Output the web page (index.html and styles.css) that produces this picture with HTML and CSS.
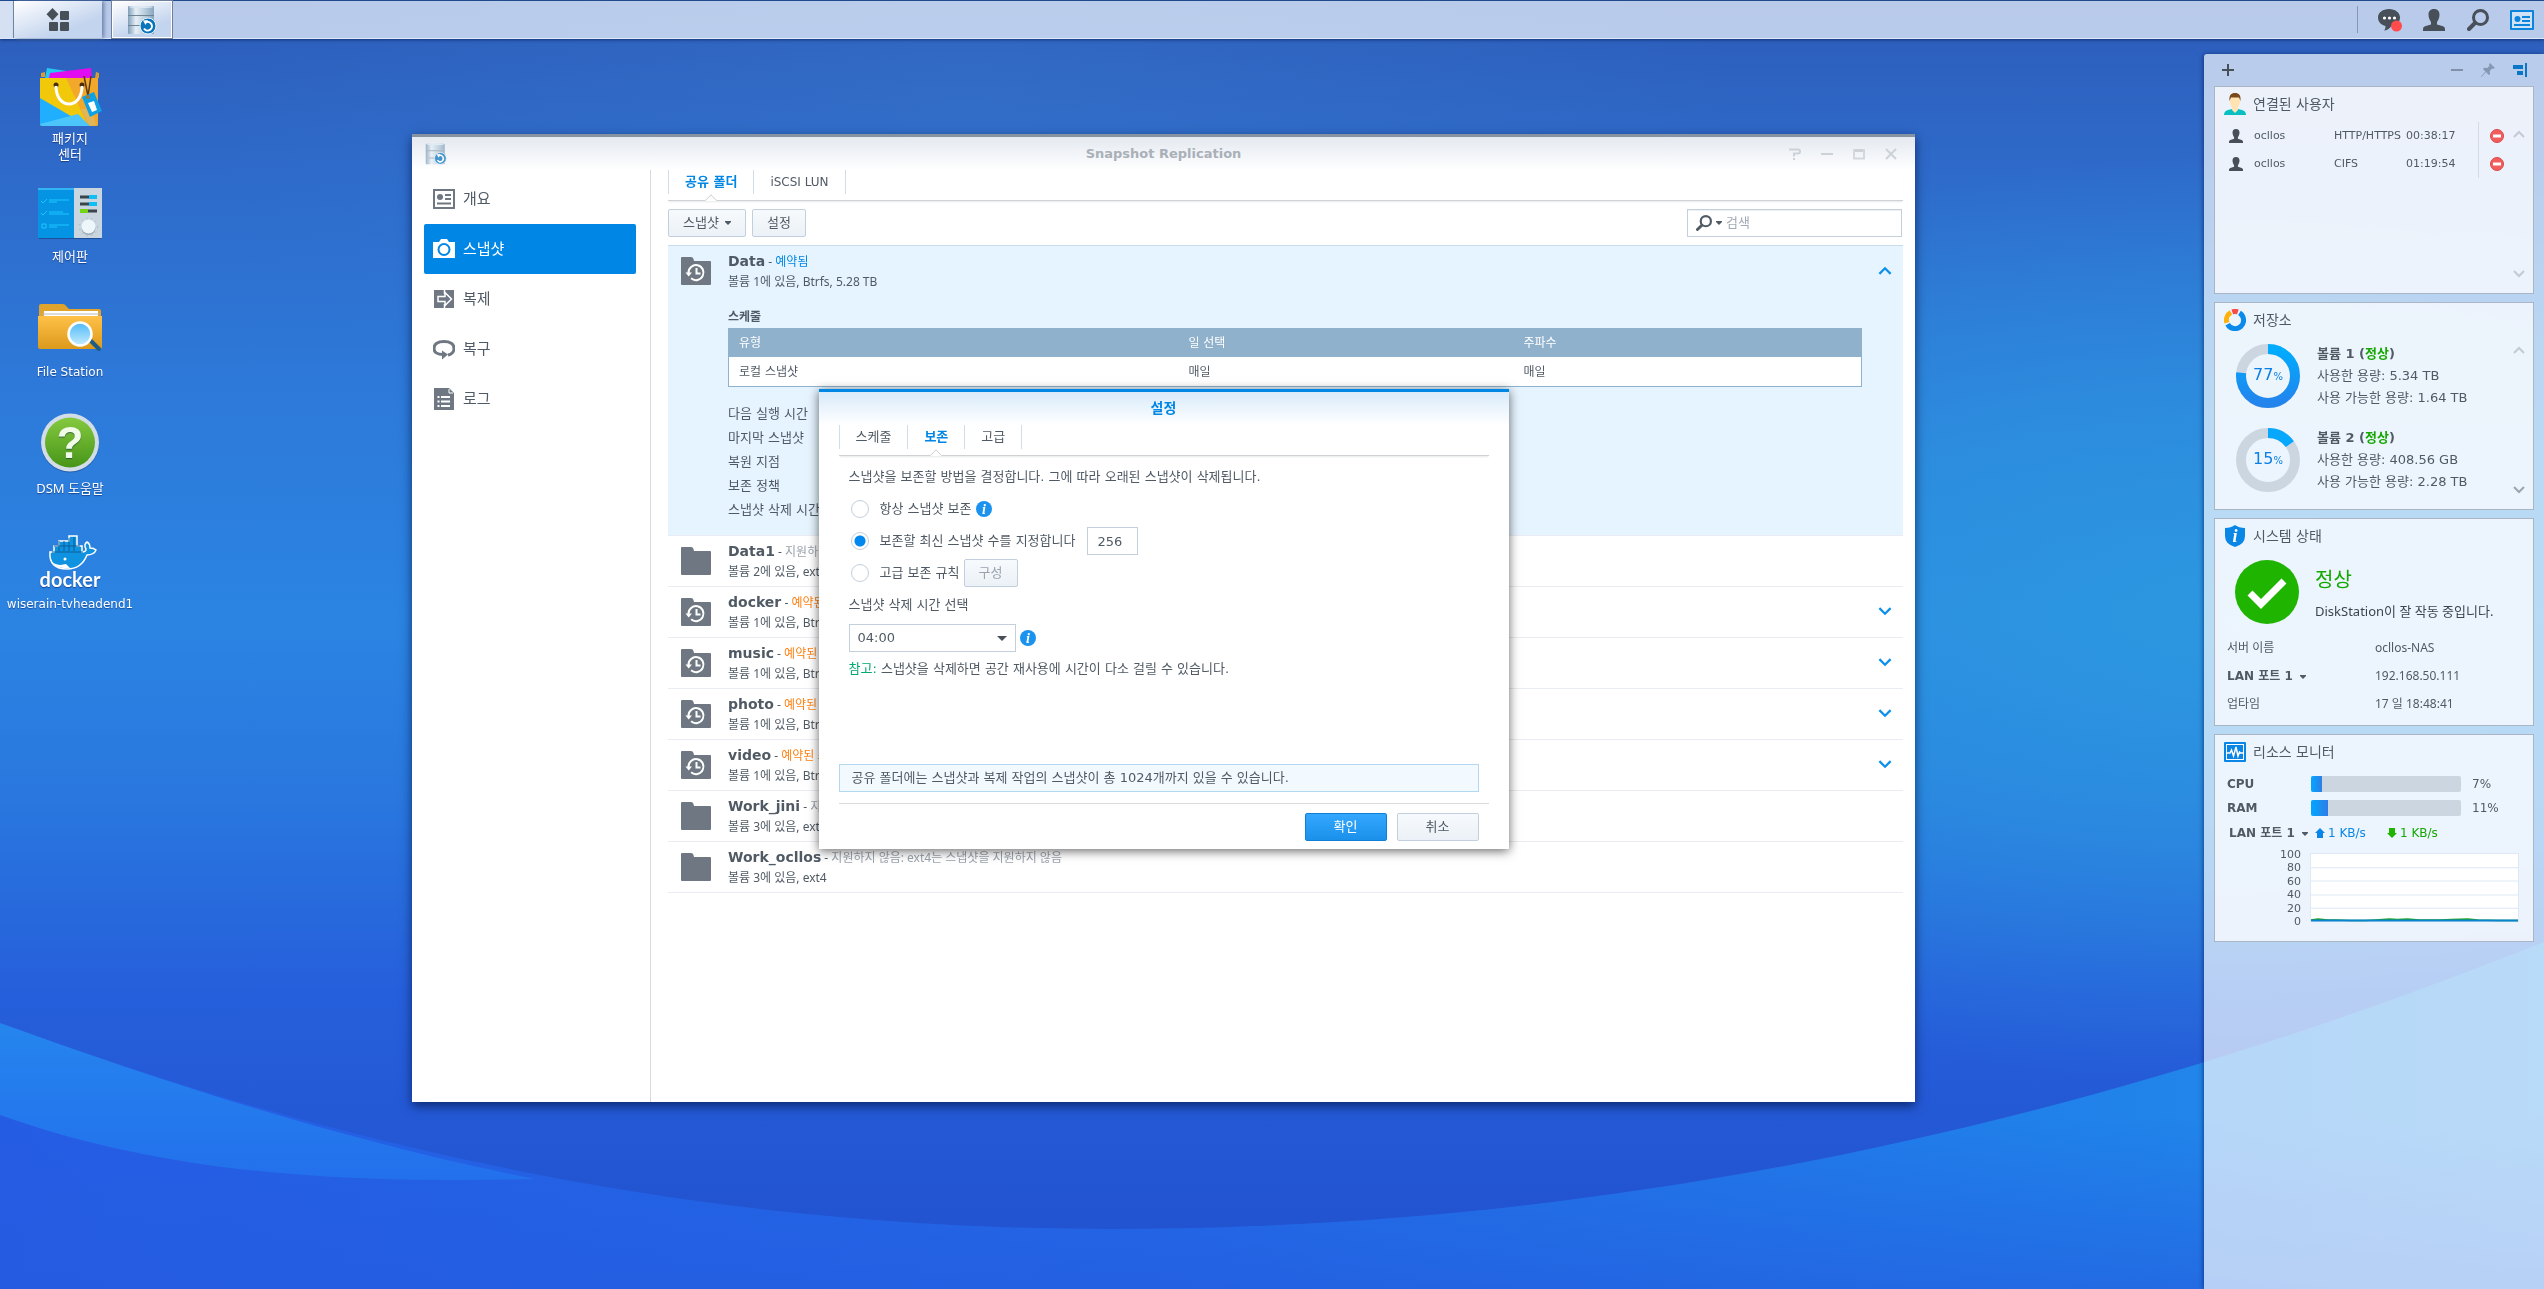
FILE: index.html
```html
<!DOCTYPE html>
<html lang="ko">
<head>
<meta charset="UTF-8">
<meta name="viewport" content="width=device-width, initial-scale=1.0">
<title>DiskStation - Snapshot Replication</title>
<link rel="stylesheet" href="styles.css">
</head>
<body>

<svg class="sprite" aria-hidden="true">
  <defs>
    <linearGradient id="g-metal"><stop offset="0" stop-color="#7f9db8"/><stop offset=".3" stop-color="#e6eff6"/><stop offset=".65" stop-color="#b9cddd"/><stop offset="1" stop-color="#88a5bf"/></linearGradient>
    <linearGradient id="g-green" x2="0" y2="1"><stop offset="0" stop-color="#85c93f"/><stop offset="1" stop-color="#479518"/></linearGradient>
    <linearGradient id="g-ring" x1="1" x2="0"><stop offset="0" stop-color="#00acff"/><stop offset="1" stop-color="#2384ec"/></linearGradient>
    <linearGradient id="g-folder" x2="0" y2="1"><stop offset="0" stop-color="#ffc148"/><stop offset="1" stop-color="#dc9a1c"/></linearGradient>
    <linearGradient id="g-lens" x2="0" y2="1"><stop offset="0" stop-color="#4fb9f5"/><stop offset="1" stop-color="#c5ecff"/></linearGradient>
  </defs>
  <symbol id="snapshot-app" viewBox="0 0 30 30">
    <path fill="url(#g-metal)" d="M1 2q0-1 1-1h24q1 0 1 1v8H1zM1 11h26v9H1zM1 21h26v7q0 1-1 1H2q-1 0-1-1z"/>
    <ellipse cx="14" cy="2" rx="12" ry="1" fill="#dde9f2"/>
    <path d="M1 10.500h26M1 20.500h26" stroke="#6f8494"/>
    <circle cx="21" cy="21" r="8" fill="#0a74bd" stroke="#eef5fa"/>
    <path d="M18.500 17.500a4.300 4.300 0 1 1-1.500 6" fill="none" stroke="#fff" stroke-width="2"/>
    <path d="M16 15.500l5-.5-2.500 5z" fill="#fff"/>
  </symbol>
  <symbol id="user" viewBox="0 0 22 22">
    <path d="M11 0c4 0 5.500 2.500 5.500 5.500 0 3.500-1.500 6-2.500 7.500v2.500l6 1.800q2 .7 2 2.700v2H0v-2q0-2 2-2.700l6-1.800V13C7 11.500 5.500 9 5.500 5.500 5.500 2.500 7 0 11 0z"/>
  </symbol>
  <symbol id="magnifier" viewBox="0 0 22 22">
    <circle cx="13.500" cy="8.500" r="7" fill="none" stroke="currentColor" stroke-width="3"/>
    <path d="M8 14l-6 6" stroke="currentColor" stroke-width="4" stroke-linecap="round"/>
  </symbol>
  <symbol id="folder" viewBox="0 0 30 28">
    <path d="M0 1q0-1 1-1h9q2 0 2.500 2l.5 2h16q1 0 1 1v22q0 1-1 1H1q-1 0-1-1z" fill="#6f7882"/>
  </symbol>
  <symbol id="folder-snap" viewBox="0 0 30 28">
    <use href="#folder"/>
    <path d="M7.500 16a7.500 7.500 0 1 1 2.600 5.300" fill="none" stroke="#fff" stroke-width="2"/>
    <path d="M4.500 15.500h6.500l-3.300 4z" fill="#fff"/>
    <path d="M15.500 11v5.500h4" fill="none" stroke="#fff" stroke-width="2"/>
  </symbol>
  <symbol id="chevron-up" viewBox="0 0 12 8"><path d="M1 7l5-5 5 5" fill="none" stroke="currentColor" stroke-width="2"/></symbol>
  <symbol id="chevron-down" viewBox="0 0 12 8"><path d="M1 1l5 5 5-5" fill="none" stroke="currentColor" stroke-width="2"/></symbol>
  <symbol id="caret" viewBox="0 0 6 4"><path d="M0 0h6v1L3 4 0 1z" fill="currentColor"/></symbol>
  <symbol id="kick" viewBox="0 0 14 14">
    <circle cx="7" cy="7" r="6.500" fill="#f25c5c" stroke="#d84a4a"/>
    <path d="M3 5.500h8v3H3z" fill="#fff"/>
  </symbol>
</svg>

<svg class="wallpaper" viewBox="0 0 2544 1289" preserveAspectRatio="none" aria-hidden="true">
  <defs>
    <linearGradient id="sky" x2="0" y2="1">
      <stop offset="0" stop-color="#2d5cba"/><stop offset=".12" stop-color="#2e69c8"/><stop offset=".3" stop-color="#2d79d9"/>
      <stop offset=".48" stop-color="#2b84e2"/><stop offset=".62" stop-color="#2977df"/><stop offset=".77" stop-color="#265fdb"/><stop offset=".95" stop-color="#2253d0"/>
    </linearGradient>
    <linearGradient id="floor"><stop offset="0" stop-color="#255ce4"/><stop offset=".45" stop-color="#226ae8"/><stop offset=".85" stop-color="#2084ea"/><stop offset="1" stop-color="#2b93ec"/></linearGradient>
    <linearGradient id="floor-shade" x2="0" y2="1"><stop offset="0" stop-color="#245ade" stop-opacity="0"/><stop offset=".5" stop-color="#245ade" stop-opacity="0"/><stop offset="1" stop-color="#245ade" stop-opacity=".6"/></linearGradient>
    <linearGradient id="band" x2="0" y2="1"><stop offset="0" stop-color="#2585ee"/><stop offset="1" stop-color="#2370ec"/></linearGradient>
    <radialGradient id="glow" cx=".88" cy=".48" r=".36"><stop offset="0" stop-color="#2c9be0" stop-opacity=".85"/><stop offset=".5" stop-color="#2c9be0" stop-opacity=".5"/><stop offset="1" stop-color="#2c9be0" stop-opacity="0"/></radialGradient>
    <radialGradient id="glow-top" cx=".38" cy=".08" r=".3"><stop offset="0" stop-color="#3b7fd0" stop-opacity=".3"/><stop offset="1" stop-color="#3b7fd0" stop-opacity="0"/></radialGradient>
  </defs>
  <rect width="2544" height="1289" fill="url(#sky)"/>
  <rect width="2544" height="1289" fill="url(#glow)"/>
  <rect width="2544" height="1289" fill="url(#glow-top)"/>
  <path d="M0 1023C350 1150 700 1229 1111 1229S2000 1160 2544 942V1289H0z" fill="url(#floor)"/>
  <path d="M0 1023C350 1150 700 1229 1111 1229S2000 1160 2544 942V1289H0z" fill="url(#floor-shade)"/>
  <path d="M0 1023C180 1088 350 1142 535 1179C330 1184 160 1172 0 1115z" fill="url(#band)"/>
</svg>

<header class="taskbar">
  <button class="task-blank" aria-label="바탕 화면 보기"></button>
  <button class="task-menu" aria-label="기본 메뉴">
    <svg width="24" height="24" viewBox="0 0 24 24" fill="#474f58">
      <path d="M6.500 0l6 6.300-6 6.200-6-6.200z"/><rect x="14" y="3" width="9" height="9" rx="1"/>
      <rect x="3" y="14" width="9" height="9" rx="1"/><rect x="14" y="14" width="9" height="9" rx="1"/>
    </svg>
  </button>
  <button class="task-app" aria-label="Snapshot Replication"><svg width="30" height="30"><use href="#snapshot-app"/></svg></button>
  <div class="tray">
    <button aria-label="알림">
      <svg width="24" height="24" viewBox="0 0 24 24">
        <path d="M11 1c6 0 11 3.500 11 8.500S18 18 13 18.500c-2 2.500-4.500 4-7 4 1-1 1.500-2.500 1.500-4.500C3 17 0 13.500 0 9.500 0 4.500 5 1 11 1z" fill="#474f58"/>
        <circle cx="6.500" cy="10" r="1.600" fill="#fff"/><circle cx="11.500" cy="10" r="1.600" fill="#fff"/><circle cx="16.500" cy="10" r="1.600" fill="#fff"/>
        <circle cx="18.500" cy="18" r="5.500" fill="#ff4b4b"/>
      </svg>
    </button>
    <button aria-label="옵션"><svg width="22" height="22" fill="#474f58"><use href="#user"/></svg></button>
    <button aria-label="검색"><svg width="22" height="22"><use href="#magnifier"/></svg></button>
    <button aria-label="위젯">
      <svg width="24" height="20" viewBox="0 0 24 20">
        <rect width="24" height="20" rx="1" fill="#0a84dc"/><rect x="2" y="2" width="20" height="16" fill="#cfe2f6"/>
        <circle cx="7.500" cy="9" r="3" fill="#0a84dc"/><path d="M12 7h8M12 11h8M4 15h16" stroke="#0a84dc" stroke-width="2"/>
      </svg>
    </button>
  </div>
</header>

<nav class="shortcuts">
  <a href="#">
    <svg width="64" height="64" viewBox="0 0 64 64">
      <path d="M9 4l26 4v6H7z" fill="#24c8f0"/><path d="M12 9l41-5 1 10H11z" fill="#e20cf0"/>
      <path d="M3 9l4-1v5H3zM58 8l3 1v5h-4z" fill="#d99b2c"/>
      <path d="M2 14h58v46q0 2-2 2H4q-2 0-2-2z" fill="#f2c80a"/>
      <path d="M28 14h32v46q0 2-2 2h-8z" fill="#f2a92b"/>
      <path d="M2 34l48 28H4q-2 0-2-2z" fill="#20aeff"/><path d="M2 60l38-10 12 12H4z" fill="#4cc6fa"/>
      <path d="M43 46l9-3 6 18-6 1z" fill="#dfb65a"/>
      <circle cx="18" cy="21" r="2.500" fill="#4b2c0c"/><circle cx="44" cy="21" r="2.500" fill="#4b2c0c"/>
      <path d="M18 22c0 24 26 24 26 0" fill="none" stroke="#fff" stroke-width="3"/>
      <path d="M46 12l4 20 3-20" fill="none" stroke="#5a3a10" stroke-width="1.500"/>
      <path d="M44 33l12-5 8 19-12 6z" fill="#0fa1e6"/><circle cx="50" cy="33" r="2" fill="#a57a2a"/>
      <path d="M50 39l6-2 3 9-5 2z" fill="#fff"/>
    </svg>
    <span>패키지<br>센터</span>
  </a>
  <a href="#">
    <svg width="64" height="64" viewBox="0 0 64 64">
      <rect x="0" y="8" width="64" height="51" rx="2" fill="#1b4f9a"/>
      <rect x="0" y="8" width="36" height="50" fill="#0594e4"/><path d="M0 9h36" stroke="#32b4f5" stroke-width="2"/>
      <rect x="36" y="8" width="28" height="50" fill="#c9d6df"/>
      <path d="M3 21l2 2 4-4M3 33l2 2 4-4M4 44h4v4H4zM11 20h20M11 22h8M11 32h14M11 34h20M11 45h20M11 47h8" fill="none" stroke="#1cc8fc" stroke-width="1"/>
      <path d="M42 17h10M42 24h10M50 31h9" stroke="#3a444c" stroke-width="3"/><path d="M51 17h8M51 24h8" stroke="#10bdf5" stroke-width="4"/><path d="M42 31h8" stroke="#74d514" stroke-width="4"/>
      <circle cx="50.500" cy="47" r="9" fill="none" stroke="#9fb0bb" stroke-dasharray="1 4"/>
      <circle cx="50.500" cy="48" r="7" fill="#9aa8b2"/><circle cx="50.500" cy="46.500" r="7" fill="#edf6fb"/>
    </svg>
    <span>제어판</span>
  </a>
  <a href="#">
    <svg width="64" height="64" viewBox="0 0 64 64">
      <path d="M1 10q0-2 2-2h22q2 0 4 3l2 2h30q2 0 2 2v8H1z" fill="#e0a32c"/>
      <path d="M6 15h54v8H6z" fill="#fff"/><path d="M4 18h58" stroke="#b9b9b9"/>
      <path d="M0 20h64v31q0 2-2 2H2q-2 0-2-2z" fill="url(#g-folder)"/>
      <path d="M53 45l8 8" stroke="#1d5c86" stroke-width="4" stroke-linecap="round"/>
      <circle cx="42" cy="38" r="11.500" fill="url(#g-lens)" stroke="#fff" stroke-width="2.500"/>
    </svg>
    <span class="latin">File Station</span>
  </a>
  <a href="#">
    <svg width="64" height="64" viewBox="0 0 64 64">
      <circle cx="32" cy="31.500" r="29" fill="#1b3f7a" opacity=".5"/>
      <circle cx="32" cy="30.500" r="29" fill="#d3dde8"/><circle cx="32" cy="30.500" r="25" fill="url(#g-green)"/>
      <text x="32" y="46" text-anchor="middle" class="help-mark">?</text>
    </svg>
    <span>DSM 도움말</span>
  </a>
  <a href="#">
    <svg width="64" height="64" viewBox="0 0 64 64">
      <path d="M12 24h4v-6h5v-5h10V8h8v10h5v6c3 0 4-1 4-3-2-3-1-6 1-7 2 1 3 4 3 6 3 0 5 1 6 2-1 3-5 5-9 5-4 10-11 14-20 14-12 0-18-6-17-17z" fill="#0f93e0" stroke="#fff" stroke-width="1.500"/>
      <path d="M16 18h26M21 13v10M26 13v10M31 10v13M36 9v14M14 24h31" stroke="#0a5f9a" fill="none"/>
      <path d="M14 34c6 4 10 3 14 2l4 4c-8 1-14-1-18-6z" fill="#fff"/><circle cx="27" cy="31" r="1.500" fill="#fff"/>
      <text x="32" y="59" text-anchor="middle" class="docker-mark">docker</text>
    </svg>
    <span class="latin">wiserain-tvheadend1</span>
  </a>
</nav>

<main class="window">
  <header class="window-head">
    <svg class="window-icon" width="22" height="22"><use href="#snapshot-app"/></svg>
    <h1>Snapshot Replication</h1>
    <div class="window-tools">
      <button aria-label="도움말"><svg width="12" height="12" viewBox="0 0 12 12"><path d="M0 1.500h9q2 0 2 2t-2 2H5v3M5 10v2" fill="none" stroke="#cdd2d8" stroke-width="2"/></svg></button>
      <button aria-label="최소화"><svg width="12" height="12" viewBox="0 0 12 12"><path d="M0 6h12" stroke="#cdd2d8" stroke-width="2"/></svg></button>
      <button aria-label="최대화"><svg width="12" height="12" viewBox="0 0 12 12"><path d="M0 2.500h12" stroke="#cdd2d8" stroke-width="3"/><path d="M1 1v9.500h10V1" fill="none" stroke="#d3d8de" stroke-width="2"/></svg></button>
      <button aria-label="닫기"><svg width="12" height="12" viewBox="0 0 12 12"><path d="M1 1l10 10M11 1L1 11" stroke="#cdd2d8" stroke-width="2"/></svg></button>
    </div>
  </header>

  <div class="window-body">
    <nav class="side-nav">
      <a href="#">
        <svg width="22" height="22" viewBox="0 0 22 22"><path d="M0 1h22v20H0z"/><path d="M2 3h18v16H2z" fill="#fff"/><circle cx="7" cy="9" r="3"/><path d="M12 7h6M12 11h6M4 15.500h14" stroke="#6f7882" stroke-width="2"/></svg>개요
      </a>
      <a href="#" class="active">
        <svg width="22" height="22" viewBox="0 0 22 22"><path d="M0 4h6l2-3h6l2 3h6v16H0z" fill="#fff"/><circle cx="11" cy="11.500" r="5.500" fill="none" stroke="#0086e5" stroke-width="2"/></svg>스냅샷
      </a>
      <a href="#">
        <svg width="22" height="22" viewBox="0 0 22 22"><path d="M1 2h20v18H1z"/><path d="M5 8.500h7V4.500l6.500 6.500-6.500 6.500v-4H5z" fill="#6f7882" stroke="#fff" stroke-width="1.500"/><path d="M11.500 1v5M11.500 16v5" stroke="#fff" stroke-width="1.500"/></svg>복제
      </a>
      <a href="#">
        <svg width="22" height="22" viewBox="0 0 22 22"><path d="M15 17c3-.5 6-3 6-6.500C21 6 17 3.500 11 3.500S1 6 1 10.500c0 4 4 6 9 6" fill="none" stroke="#6f7882" stroke-width="3"/><path d="M9 12.500l6 4-6 5z"/></svg>복구
      </a>
      <a href="#">
        <svg width="22" height="22" viewBox="0 0 22 22"><path d="M1 0h15l5 5v17H1z"/><path d="M16 1v4h4" fill="none" stroke="#fff"/><path d="M8 9h9M8 13.500h9M8 18h9M4.500 9h2M4.500 13.500h2M4.500 18h2" stroke="#fff" stroke-width="2"/></svg>로그
      </a>
    </nav>

    <section class="content">
      <div class="tabs">
        <button class="active">공유 폴더</button>
        <button class="latin">iSCSI LUN</button>
      </div>
      <div class="toolbar">
        <button class="btn btn-menu">스냅샷<svg width="6" height="4"><use href="#caret"/></svg></button>
        <button class="btn btn-set">설정</button>
        <label class="search">
          <svg width="16" height="16"><use href="#magnifier"/></svg>
          <svg width="6" height="4"><use href="#caret"/></svg>
          <input type="search" placeholder="검색" aria-label="검색">
        </label>
      </div>

      <ul class="shares">
        <li class="open">
          <svg class="share-icon" width="30" height="28"><use href="#folder-snap"/></svg>
          <div>
            <p class="share-name"><b>Data</b> - <span class="blue">예약됨</span></p>
            <p class="share-sub">볼륨 1에 있음, Btrfs, 5.28 TB</p>
          </div>
          <button class="toggle" aria-label="접기"><svg width="14" height="9"><use href="#chevron-up"/></svg></button>
          <div class="detail">
            <h2>스케줄</h2>
            <table>
              <thead><tr><th>유형</th><th>일 선택</th><th>주파수</th></tr></thead>
              <tbody><tr><td>로컬 스냅샷</td><td>매일</td><td>매일</td></tr></tbody>
            </table>
            <ul class="facts">
              <li>다음 실행 시간</li>
              <li>마지막 스냅샷</li>
              <li>복원 지점</li>
              <li>보존 정책</li>
              <li>스냅샷 삭제 시간</li>
            </ul>
          </div>
        </li>
        <li>
          <svg class="share-icon" width="30" height="28"><use href="#folder"/></svg>
          <div>
            <p class="share-name"><b>Data1</b> - <span class="grey">지원하지 않음: ext4는 스냅샷을 지원하지 않음</span></p>
            <p class="share-sub">볼륨 2에 있음, ext4</p>
          </div>
        </li>
        <li>
          <svg class="share-icon" width="30" height="28"><use href="#folder-snap"/></svg>
          <div>
            <p class="share-name"><b>docker</b> - <span class="orange">예약된 스냅샷 없음</span></p>
            <p class="share-sub">볼륨 1에 있음, Btrfs</p>
          </div>
          <button class="toggle" aria-label="펼치기"><svg width="14" height="9"><use href="#chevron-down"/></svg></button>
        </li>
        <li>
          <svg class="share-icon" width="30" height="28"><use href="#folder-snap"/></svg>
          <div>
            <p class="share-name"><b>music</b> - <span class="orange">예약된 스냅샷 없음</span></p>
            <p class="share-sub">볼륨 1에 있음, Btrfs</p>
          </div>
          <button class="toggle" aria-label="펼치기"><svg width="14" height="9"><use href="#chevron-down"/></svg></button>
        </li>
        <li>
          <svg class="share-icon" width="30" height="28"><use href="#folder-snap"/></svg>
          <div>
            <p class="share-name"><b>photo</b> - <span class="orange">예약된 스냅샷 없음</span></p>
            <p class="share-sub">볼륨 1에 있음, Btrfs</p>
          </div>
          <button class="toggle" aria-label="펼치기"><svg width="14" height="9"><use href="#chevron-down"/></svg></button>
        </li>
        <li>
          <svg class="share-icon" width="30" height="28"><use href="#folder-snap"/></svg>
          <div>
            <p class="share-name"><b>video</b> - <span class="orange">예약된 스냅샷 없음</span></p>
            <p class="share-sub">볼륨 1에 있음, Btrfs</p>
          </div>
          <button class="toggle" aria-label="펼치기"><svg width="14" height="9"><use href="#chevron-down"/></svg></button>
        </li>
        <li>
          <svg class="share-icon" width="30" height="28"><use href="#folder"/></svg>
          <div>
            <p class="share-name"><b>Work_jini</b> - <span class="grey">지원하지 않음: ext4는 스냅샷을 지원하지 않음</span></p>
            <p class="share-sub">볼륨 3에 있음, ext4</p>
          </div>
        </li>
        <li>
          <svg class="share-icon" width="30" height="28"><use href="#folder"/></svg>
          <div>
            <p class="share-name"><b>Work_ocllos</b> - <span class="grey">지원하지 않음: ext4는 스냅샷을 지원하지 않음</span></p>
            <p class="share-sub">볼륨 3에 있음, ext4</p>
          </div>
        </li>
      </ul>
    </section>
  </div>

  <form class="dialog" role="dialog" aria-labelledby="dialog-title">
    <h2 id="dialog-title">설정</h2>
    <div class="tabs">
      <button type="button">스케줄</button>
      <button type="button" class="active">보존</button>
      <button type="button">고급</button>
    </div>
    <div class="dialog-body">
      <p>스냅샷을 보존할 방법을 결정합니다. 그에 따라 오래된 스냅샷이 삭제됩니다.</p>
      <div class="option">
        <input type="radio" name="keep" id="keep-all"><label for="keep-all">항상 스냅샷 보존</label>
        <svg width="16" height="16" viewBox="0 0 16 16"><circle cx="8" cy="8" r="8" fill="#1b93ee"/><text x="8" y="13" text-anchor="middle" class="info-i">i</text></svg>
      </div>
      <div class="option">
        <input type="radio" name="keep" id="keep-count" checked><label for="keep-count">보존할 최신 스냅샷 수를 지정합니다</label>
        <input type="text" class="count" value="256" aria-label="스냅샷 수">
      </div>
      <div class="option">
        <input type="radio" name="keep" id="keep-rule"><label for="keep-rule">고급 보존 규칙</label>
        <button type="button" class="btn btn-set" disabled>구성</button>
      </div>
      <label class="time-label" for="time">스냅샷 삭제 시간 선택</label>
      <div class="time-row">
        <span class="select"><select id="time"><option>04:00</option></select><svg width="10" height="5" viewBox="0 0 10 5"><path d="M0 0h10L5 5z" fill="#474f58"/></svg></span>
        <svg width="16" height="16" viewBox="0 0 16 16"><circle cx="8" cy="8" r="8" fill="#1b93ee"/><text x="8" y="13" text-anchor="middle" class="info-i">i</text></svg>
      </div>
      <p class="note"><span>참고:</span> 스냅샷을 삭제하면 공간 재사용에 시간이 다소 걸릴 수 있습니다.</p>
      <p class="notice">공유 폴더에는 스냅샷과 복제 작업의 스냅샷이 총 1024개까지 있을 수 있습니다.</p>
    </div>
    <div class="dialog-foot">
      <button type="button" class="btn btn-primary">확인</button>
      <button type="button" class="btn">취소</button>
    </div>
  </form>
</main>

<aside class="widgets">
  <div class="widgets-bar">
    <button aria-label="추가"><svg width="12" height="12" viewBox="0 0 12 12"><path d="M6 0v12M0 6h12" stroke="#474f58" stroke-width="2"/></svg></button>
    <button class="push" aria-label="최소화"><svg width="12" height="12" viewBox="0 0 12 12"><path d="M0 6h12" stroke="#7f90a8" stroke-width="2"/></svg></button>
    <button aria-label="고정"><svg width="14" height="14" viewBox="0 0 14 14" fill="#8497b3"><path d="M9 0l5 5-1.500.8L11 5.500 8.800 8l.2 3-1.200 1L5 9l-4.500 5L0 13.500 4.500 8.500 2 6l1-1.200 3.200.2L8.500 3 8 1.500z"/></svg></button>
    <button aria-label="도킹"><svg width="14" height="14" viewBox="0 0 14 14" fill="#0a76c8"><path d="M0 2h10v4H0zM4 8h6v4H4zM12 0h2v14h-2z"/></svg></button>
  </div>

  <section class="widget">
    <h3>
      <svg width="22" height="22" viewBox="0 0 22 22"><path d="M0 22q0-4 4-5l4-1h6l4 1q4 1 4 5z" fill="#08bfc1"/><path d="M8 13h6v4l-3 3-3-3z" fill="#ffe3b3"/><ellipse cx="11" cy="8.500" rx="5" ry="7" fill="#ffe3b3"/><path d="M5.500 8C5 2 7 0 11 0s6 2 5.500 8L15 4.500H7z" fill="#7a4a1c"/></svg>
      연결된 사용자
    </h3>
    <div class="scroller">
      <table class="users">
        <tr><td><svg width="14" height="14" fill="#474f58"><use href="#user"/></svg></td><td>ocllos</td><td>HTTP/HTTPS</td><td>00:38:17</td><td><button aria-label="연결 끊기"><svg width="14" height="14"><use href="#kick"/></svg></button></td></tr>
        <tr><td><svg width="14" height="14" fill="#474f58"><use href="#user"/></svg></td><td>ocllos</td><td>CIFS</td><td>01:19:54</td><td><button aria-label="연결 끊기"><svg width="14" height="14"><use href="#kick"/></svg></button></td></tr>
      </table>
      <div class="arrows"><svg width="12" height="8"><use href="#chevron-up"/></svg><svg width="12" height="8"><use href="#chevron-down"/></svg></div>
    </div>
  </section>

  <section class="widget">
    <h3>
      <svg width="22" height="22" viewBox="0 0 22 22" fill="none" stroke-width="5"><path d="M15.500 3.900A8.500 8.500 0 1 1 3.600 15.200" stroke="#0a8aea"/><path d="M2.900 13.700A8.500 8.500 0 0 1 7 3.500" stroke="#ffb10a"/><path d="M8.300 2.900a8.500 8.500 0 0 1 5.600 0" stroke="#fa4b4b"/></svg>
      저장소
    </h3>
    <div class="scroller">
      <div class="volumes">
        <div class="volume">
          <div class="ring">
            <svg width="64" height="64" viewBox="0 0 64 64"><circle cx="32" cy="32" r="27" stroke="#ccd6e0"/><circle cx="32" cy="32" r="27" stroke="url(#g-ring)" pathLength="100" stroke-dasharray="77 23" transform="rotate(-90 32 32)"/></svg>
            <span>77<small>%</small></span>
          </div>
          <p><b>볼륨 1 (<em>정상</em>)</b><br>사용한 용량: 5.34 TB<br>사용 가능한 용량: 1.64 TB</p>
        </div>
        <div class="volume">
          <div class="ring">
            <svg width="64" height="64" viewBox="0 0 64 64"><circle cx="32" cy="32" r="27" stroke="#ccd6e0"/><circle cx="32" cy="32" r="27" stroke="#06a8fd" pathLength="100" stroke-dasharray="15 85" transform="rotate(-90 32 32)"/></svg>
            <span>15<small>%</small></span>
          </div>
          <p><b>볼륨 2 (<em>정상</em>)</b><br>사용한 용량: 408.56 GB<br>사용 가능한 용량: 2.28 TB</p>
        </div>
      </div>
      <div class="arrows"><svg width="12" height="8"><use href="#chevron-up"/></svg><svg class="on" width="12" height="8"><use href="#chevron-down"/></svg></div>
    </div>
  </section>

  <section class="widget">
    <h3>
      <svg width="22" height="22" viewBox="0 0 22 22"><path d="M1 3q6 0 10-3 4 3 10 3v8q0 8-10 11Q1 19 1 11z" fill="#0a86e6"/><text x="11" y="17" text-anchor="middle" class="info-i info-big">i</text></svg>
      시스템 상태
    </h3>
    <div class="health">
      <svg width="64" height="64" viewBox="0 0 64 64"><circle cx="32" cy="32" r="32" fill="#1fb400"/><path d="M15 33l11 11 23-23" fill="none" stroke="#fff" stroke-width="7"/></svg>
      <div><strong>정상</strong><p>DiskStation이 잘 작동 중입니다.</p></div>
    </div>
    <dl class="sysinfo">
      <dt>서버 이름</dt><dd>ocllos-NAS</dd>
      <dt class="port">LAN 포트 1 <svg width="6" height="4"><use href="#caret"/></svg></dt><dd>192.168.50.111</dd>
      <dt>업타임</dt><dd>17 일 18:48:41</dd>
    </dl>
  </section>

  <section class="widget">
    <h3>
      <svg width="22" height="20" viewBox="0 0 22 20"><rect width="22" height="20" rx="1" fill="#0a86e6"/><rect x="2.500" y="2.500" width="17" height="15" fill="none" stroke="#fff"/><path d="M3 11h3l1.500-3 2 6L12 5l2 9 1.500-4 1 1H19" fill="none" stroke="#fff" stroke-width="1.500"/></svg>
      리소스 모니터
    </h3>
    <div class="meter"><b>CPU</b><div class="track"><i style="width: 7%"></i></div><span>7%</span></div>
    <div class="meter"><b>RAM</b><div class="track"><i style="width: 11%"></i></div><span>11%</span></div>
    <div class="lan">
      <b>LAN 포트 1 <svg width="6" height="4"><use href="#caret"/></svg></b>
      <span class="up"><svg width="10" height="10" viewBox="0 0 10 10"><path d="M5 0l5 5H8v5H2V5H0z" fill="#0a86e6"/></svg>1 KB/s</span>
      <span class="down"><svg width="10" height="10" viewBox="0 0 10 10"><path d="M5 10l5-5H8V0H2v5H0z" fill="#1fb400"/></svg>1 KB/s</span>
    </div>
    <div class="chart">
      <div class="axis"><span>100</span><span>80</span><span>60</span><span>40</span><span>20</span><span>0</span></div>
      <svg viewBox="0 0 208 68" preserveAspectRatio="none">
        <path d="M.5.500h207v67H.5z" fill="#fff" stroke="#dfe9f5"/>
        <path d="M0 14.500h208M0 27.500h208M0 41.500h208M0 54.500h208" stroke="#dfe9f5"/>
        <path d="M1 66l7-1 10 1h8l14 .5h15l10-.5 14-1 8 .5 10-.5 12 1h20l12-.5 16-.5 10 1 20 .5h20" fill="none" stroke="#1fa51c" stroke-width="1.500"/>
        <path d="M1 66.500h206" stroke="#0a84d0" stroke-width="2"/>
      </svg>
    </div>
  </section>
</aside>

</body>
</html>
```

FILE: styles.css
```css
* {
  box-sizing: border-box;
}
body {
  margin: 0;
  min-height: 100vh;
  overflow: hidden;
  background: #2b6fd8;
  color: #505a64;
  font: 13px/16px "DejaVu Sans", "Noto Sans CJK KR", sans-serif;
}
h1, h2, h3, p, ul, dl, dd {
  margin: 0;
  padding: 0;
  font-weight: normal;
}
ul {
  list-style: none;
}
a {
  color: inherit;
  text-decoration: none;
}
button, input, select {
  margin: 0;
  padding: 0;
  border: 0;
  background: none;
  color: inherit;
  font: inherit;
}
svg {
  flex: none;
}
.sprite {
  position: absolute;
  width: 0;
  height: 0;
}
.latin {
  font-family: "DejaVu Sans", sans-serif;
  font-size: 12px;
}
.info-i {
  font: italic bold 14px "Liberation Serif", serif;
  fill: #fff;
}
.info-big {
  font-size: 18px;
}
.help-mark {
  font: bold 44px "Liberation Sans", sans-serif;
  fill: #f0fbe8;
}
.docker-mark {
  font: bold 20px Lato, sans-serif;
  fill: #fff;
}
.wallpaper {
  position: fixed;
  inset: 0;
  width: 100%;
  height: 100%;
}

/* taskbar */
.taskbar {
  position: relative;
  display: flex;
  height: 39px;
  border-top: 1px solid #1f4a8e;
  border-bottom: 1px solid #dce8f6;
  background: rgba(245, 249, 254, .7);
  box-shadow: 0 1px 3px rgba(0, 20, 70, .6);
}
.taskbar button {
  display: flex;
  align-items: center;
  justify-content: center;
}
.taskbar .task-blank {
  width: 14px;
  border-right: 1px solid #7184a4;
  background: rgba(255, 255, 255, .4);
}
.taskbar .task-menu {
  width: 88px;
  margin-right: 10px;
  background: linear-gradient(160deg, #fff, #c3d4ee 70%);
  box-shadow: 2px 0 4px #6c80a6;
}
.taskbar .task-app {
  width: 60px;
  border: 1px solid #fff;
  background: linear-gradient(160deg, #fff, #c3d4ee 70%);
  box-shadow: 0 0 0 1px #6f7f9a;
}
.tray {
  display: flex;
  margin-left: auto;
  color: #474f58;
}
.tray::before {
  content: "";
  width: 1px;
  margin: 5px 10px 5px 0;
  background: #8398b8;
}
.tray button {
  width: 44px;
}

/* desktop shortcuts */
.shortcuts {
  position: absolute;
  top: 64px;
  left: 0;
  width: 140px;
  color: #fff;
  font-family: "Noto Sans", "Noto Sans CJK KR", sans-serif;
  text-align: center;
  text-shadow: 0 1px 1px rgba(0, 20, 80, .5);
}
.shortcuts a {
  display: flex;
  flex-direction: column;
  align-items: center;
  gap: 4px;
  height: 116px;
}
.shortcuts a:first-child {
  gap: 2px;
}

/* application window */
.window {
  position: absolute;
  top: 134px;
  right: 629px;
  bottom: 187px;
  left: 412px;
  display: flex;
  flex-direction: column;
  border-top: 3px solid #8693a1;
  background: #fff;
  box-shadow: 0 4px 10px rgba(0, 20, 70, .7);
}
.window-head {
  display: flex;
  align-items: center;
  height: 33px;
  padding: 0 8px 0 13px;
  background: linear-gradient(#e4e9f0, #fff);
}
.window-head h1 {
  flex: 1;
  margin-left: 101px;
  color: #a9b0b8;
  font: bold 13px/16px "DejaVu Sans", sans-serif;
  text-align: center;
}
.window-icon {
  opacity: .75;
}
.window-tools {
  display: flex;
}
.window-tools button {
  display: flex;
  justify-content: center;
  width: 32px;
}
.window-body {
  display: flex;
  flex: 1;
}
.side-nav {
  width: 239px;
  padding: 4px 14px 0 12px;
  border-right: 1px solid #d8dadd;
}
.side-nav a {
  display: flex;
  align-items: center;
  gap: 8px;
  height: 50px;
  padding-left: 9px;
  border-radius: 2px;
  font-size: 15px;
}
.side-nav svg {
  fill: #6f7882;
}
.side-nav .active {
  background: #0086e5;
  color: #fff;
}
.content {
  flex: 1;
  padding: 0 12px 0 17px;
}

/* tabs */
.tabs {
  display: flex;
  height: 31px;
  padding-bottom: 6px;
  border-bottom: 1px solid #cfd1d4;
  box-shadow: 0 2px 2px -1px #e6e8ea;
}
.tabs button {
  position: relative;
  padding: 0 16px;
  border-left: 1px solid #d2dde8;
}
.tabs button:last-child {
  border-right: 1px solid #d2dde8;
}
.tabs .active {
  color: #0086e5;
  font-weight: bold;
}
.tabs .active::after {
  content: "";
  position: absolute;
  bottom: -12px;
  left: 50%;
  width: 9px;
  height: 9px;
  margin-left: -5px;
  border-top: 1px solid #cfd1d4;
  border-left: 1px solid #cfd1d4;
  background: #fff;
  transform: rotate(45deg);
  clip-path: polygon(0 0, 100% 0, 0 100%);
}

/* buttons and fields */
.btn {
  height: 28px;
  border: 1px solid #c3cfdc;
  border-radius: 2px;
  background: linear-gradient(#f7fafd, #ebf1f6);
}
.btn:disabled {
  color: #9aa3ad;
}
.btn-menu {
  display: flex;
  align-items: center;
  justify-content: center;
  gap: 6px;
  width: 78px;
}
.btn-set {
  width: 54px;
}
.btn-primary {
  border-color: #1080d6;
  background: linear-gradient(#34a8ff, #1b90ea);
  color: #fff;
}
.toolbar {
  display: flex;
  gap: 6px;
  padding: 8px 0;
}
.search {
  display: flex;
  align-items: center;
  gap: 4px;
  width: 215px;
  height: 28px;
  margin: 0 1px 0 auto;
  padding-left: 8px;
  border: 1px solid #c3cfdc;
  box-shadow: inset 0 1px 1px #eef1f4;
}
.search input {
  flex: 1;
  min-width: 0;
  outline: 0;
}
.search input::placeholder {
  color: #a3abb5;
  opacity: 1;
}

/* shared folder list */
.shares {
  border-top: 1px solid #c9dcec;
}
.shares > li {
  display: grid;
  grid-template-columns: 60px 1fr 36px;
  min-height: 51px;
  padding-top: 5px;
  border-bottom: 1px solid #e9edf1;
}
.share-icon {
  margin: 6px 0 0 13px;
}
.share-name, .share-sub {
  font-family: "Noto Sans", "Noto Sans CJK KR", sans-serif;
  font-size: 12px;
}
.share-name {
  line-height: 20px;
}
.share-name b {
  font: bold 14px/20px "DejaVu Sans", sans-serif;
}
.share-sub {
  margin-top: 2px;
}
.blue {
  color: #0086e5;
}
.grey {
  color: #9aa3ad;
}
.orange {
  color: #ff8010;
}
.toggle {
  height: 40px;
  color: #0c90ea;
}
.shares .open {
  background: #e6f4ff;
}
.detail {
  grid-column: 2 / 4;
  margin: 16px 41px 13px 0;
}
.detail h2 {
  font-size: 12px;
  font-weight: bold;
  line-height: 20px;
}
.detail table {
  width: 100%;
  margin: 1px 0 15px;
  border: 1px solid #8fb1cc;
  border-spacing: 0;
  background: #fff;
  font-size: 12px;
  table-layout: fixed;
}
.detail th, .detail td {
  height: 29px;
  padding: 0 10px;
  text-align: left;
}
.detail th {
  height: 28px;
  background: #8fb1cc;
  color: #fff;
  font-weight: normal;
}
.detail th:first-child {
  width: 39.7%;
}
.detail th:nth-child(2) {
  width: 29.6%;
}
.facts {
  line-height: 24px;
}

/* dialog */
.dialog {
  position: absolute;
  top: 252px;
  left: 50%;
  display: flex;
  flex-direction: column;
  width: 690px;
  min-height: 460px;
  margin-left: -345px;
  padding: 0 20px 8px;
  border-top: 3px solid #0086e5;
  background: linear-gradient(#d8eafa, #fff 33px);
  box-shadow: 0 2px 10px rgba(0, 0, 0, .6);
}
.dialog h2 {
  color: #0086e5;
  font-size: 14px;
  font-weight: bold;
  line-height: 32px;
  margin-bottom: 1px;
  text-align: center;
}
.dialog-body {
  display: flex;
  flex: 1;
  flex-direction: column;
  padding: 11px 10px 11px;
}
.dialog-body p {
  line-height: 20px;
}
.option {
  display: flex;
  align-items: center;
  height: 32px;
}
.dialog-body p + .option {
  margin-top: 6px;
}
.option input[type="radio"] {
  width: 18px;
  height: 18px;
  margin: 0 11px 0 2px;
  border: 1px solid #c3cfdc;
  border-radius: 50%;
  background: #fff;
  appearance: none;
}
.option input[type="radio"]:checked {
  background: radial-gradient(#0088f0 5px, #fff 6px);
}
.option svg, .option .btn, .time-row > svg {
  margin-left: 4px;
}
.option .count {
  width: 51px;
  height: 28px;
  margin-left: 12px;
  padding-left: 9px;
  border: 1px solid #c3cfdc;
}
.time-label {
  line-height: 32px;
}
.time-row {
  display: flex;
  align-items: center;
  margin: 3px 0 7px;
}
.select {
  position: relative;
  width: 167px;
}
.select select {
  width: 100%;
  height: 28px;
  padding: 0 8px;
  border: 1px solid #c3cfdc;
  appearance: none;
}
.select svg {
  position: absolute;
  top: 12px;
  right: 9px;
}
.note span {
  color: #00a872;
}
.dialog-body .notice {
  margin: auto 0 0 -10px;
  padding: 0 12px;
  border: 1px solid #b3d8f2;
  background: #f2f9ff;
  line-height: 26px;
}
.dialog-foot {
  display: flex;
  justify-content: flex-end;
  gap: 10px;
  padding: 9px 10px 0 0;
  border-top: 1px solid #d8dadd;
}
.dialog-foot .btn {
  width: 82px;
}

/* widget panel */
.widgets {
  position: absolute;
  top: 54px;
  right: 0;
  bottom: 0;
  width: 340px;
  padding: 0 10px;
  border-radius: 3px 0 0;
  background: rgba(245, 250, 254, .7);
  box-shadow: -1px 0 4px rgba(0, 30, 90, .6);
}
.widgets button {
  display: block;
}
.widgets button svg {
  display: block;
}
.widgets-bar {
  display: flex;
  align-items: center;
  gap: 18px;
  height: 32px;
  padding: 0 7px 0 8px;
}
.push {
  margin-left: auto;
}
.widget {
  height: 208px;
  margin-bottom: 8px;
  border: 1px solid #aab6c4;
  background: rgba(255, 255, 255, .73);
}
.widget h3 {
  display: flex;
  align-items: center;
  gap: 7px;
  height: 33px;
  margin-bottom: 2px;
  padding-left: 9px;
  font-size: 14px;
}
.scroller {
  display: flex;
  justify-content: space-between;
  height: 164px;
}
.arrows {
  display: flex;
  flex-direction: column;
  justify-content: space-between;
  padding: 8px 8px 8px 0;
  color: #c3cad2;
}
.arrows .on {
  color: #9ba5b0;
}
.users {
  height: 56px;
  margin-left: 14px;
  border-spacing: 0;
  font: 11px/16px "DejaVu Sans", sans-serif;
}
.users td {
  height: 28px;
  padding: 0;
}
.users td:nth-child(1) {
  width: 25px;
}
.users td:nth-child(1) svg {
  display: block;
}
.users td:nth-child(2) {
  width: 80px;
}
.users td:nth-child(3), .users td:nth-child(4) {
  width: 72px;
}
.users td:nth-child(5) {
  padding-left: 11px;
  border-left: 1px solid #d3dbe4;
}
.volumes {
  padding: 5px 0 0 21px;
}
.volume {
  display: flex;
  align-items: center;
  gap: 17px;
  height: 66px;
  margin-bottom: 18px;
  line-height: 22px;
}
.volume em {
  color: #14a800;
  font-style: normal;
}
.ring {
  display: grid;
  place-items: center;
}
.ring > * {
  grid-area: 1 / 1;
}
.ring circle {
  fill: none;
  stroke-width: 10;
}
.ring span {
  color: #0a7fe6;
  font: 16px/16px "DejaVu Sans", sans-serif;
}
.ring small {
  font-size: 10px;
}
.health {
  display: flex;
  gap: 16px;
  padding: 6px 0 0 20px;
}
.health strong {
  display: block;
  margin: 6px 0 9px;
  color: #14a800;
  font-size: 20px;
  font-weight: normal;
  line-height: 28px;
}
.health p {
  color: #3c444c;
}
.health p, .sysinfo {
  font-family: "Noto Sans", "Noto Sans CJK KR", sans-serif;
}
.sysinfo {
  display: grid;
  grid-template-columns: 148px 1fr;
  margin: 10px 0 0 12px;
  font-size: 12px;
  line-height: 28px;
}
.port, .lan b {
  font-family: "DejaVu Sans", "Noto Sans CJK KR", sans-serif;
  font-size: 12px;
  font-weight: bold;
}
.port svg, .lan b svg {
  margin: 0 0 1px 3px;
}
.meter {
  display: flex;
  align-items: center;
  height: 24px;
  padding-left: 12px;
  font-size: 12px;
}
h3 + .meter {
  margin-top: 4px;
}
.meter b {
  width: 84px;
  font: bold 12px/16px "DejaVu Sans", sans-serif;
}
.track {
  width: 150px;
  height: 16px;
  margin-right: 11px;
  overflow: hidden;
  border-radius: 2px;
  background: #ccd6e0;
}
.track i {
  display: block;
  height: 100%;
  background: linear-gradient(90deg, #00a8ff, #2f7ce6);
}
.lan {
  display: flex;
  align-items: center;
  height: 26px;
  padding-left: 14px;
}
.lan b {
  width: 86px;
}
.lan span {
  display: flex;
  align-items: center;
  gap: 3px;
  width: 72px;
  font: 12px/16px "DejaVu Sans", sans-serif;
}
.up {
  color: #0a86e6;
}
.down {
  color: #14a800;
}
.chart {
  display: flex;
  gap: 9px;
  padding: 2px 14px 0 0;
}
.chart svg {
  width: 209px;
  height: 69px;
  margin-top: 5px;
}
.axis {
  display: flex;
  flex: 1;
  flex-direction: column;
  justify-content: space-between;
  height: 80px;
  font: 11px/13px "DejaVu Sans", sans-serif;
  text-align: right;
}
```
